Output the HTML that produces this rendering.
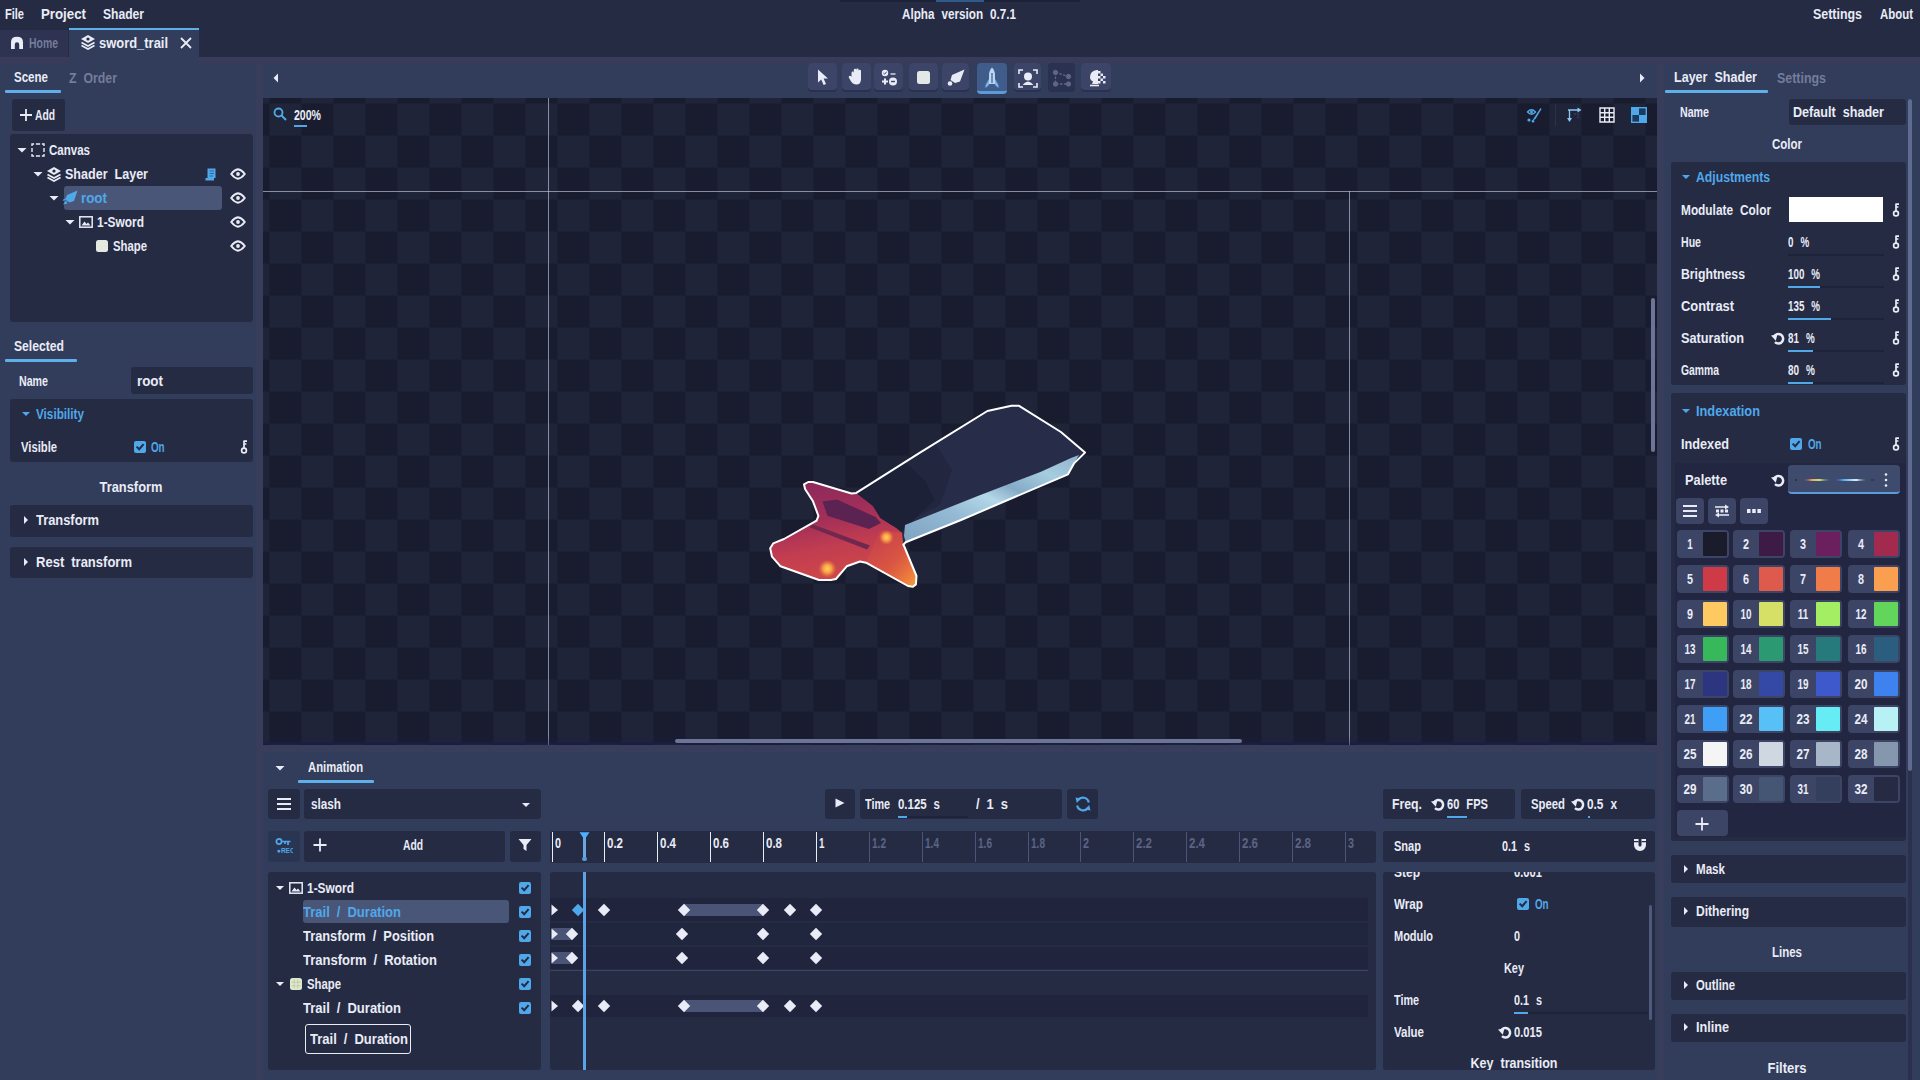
<!DOCTYPE html>
<html><head><meta charset="utf-8"><title>sword_trail</title>
<style>
html,body{margin:0;padding:0;background:#323c5b;}
body{width:1920px;height:1080px;position:relative;overflow:hidden;font-family:"Liberation Sans","DejaVu Sans",sans-serif;font-weight:bold;font-size:14px;}
div,svg,span.t{position:absolute;display:block;}
span.t{height:20px;line-height:20px;white-space:pre;}
</style></head><body>
<!--menu bar-->
<div style="left:0px;top:0px;width:1920px;height:1080px;background:#323c5b;"></div>
<div style="left:0px;top:0px;width:1920px;height:58px;background:#262b44;"></div>
<div style="left:840px;top:0px;width:240px;height:2px;background:#1d2137;"></div>
<div style="left:936px;top:0px;width:48px;height:2px;background:#31598a;"></div>
<span class="t" style="top:4px;color:#e9ecf6;transform:scaleX(0.788);left:5px;transform-origin:0 50%;">File</span>
<span class="t" style="top:4px;color:#e9ecf6;transform:scaleX(0.948);left:41px;transform-origin:0 50%;">Project</span>
<span class="t" style="top:4px;color:#e9ecf6;transform:scaleX(0.864);left:103px;transform-origin:0 50%;">Shader</span>
<span class="t" style="top:4px;color:#e9ecf6;transform:scaleX(0.835);word-spacing:4.50px;left:809px;width:300px;text-align:center;transform-origin:50% 50%;">Alpha version 0.7.1</span>
<span class="t" style="top:4px;color:#e9ecf6;transform:scaleX(0.887);left:1813px;transform-origin:0 50%;">Settings</span>
<span class="t" style="top:4px;color:#e9ecf6;transform:scaleX(0.816);left:1880px;transform-origin:0 50%;">About</span>
<div style="left:0px;top:57px;width:1920px;height:7px;background:#383c5a;"></div>
<div style="left:263px;top:745px;width:1394px;height:7px;background:#383d5b;"></div>
<div style="left:0px;top:30px;width:68px;height:27px;background:#2d3350;"></div>
<div style="left:69px;top:28px;width:130px;height:36px;background:#323c5b;"></div>
<div style="left:69px;top:28px;width:130px;height:2px;background:#5fb0e8;"></div>
<svg style="left:10px;top:36px;" width="14" height="13" viewBox="0 0 14 13"><path d="M1 13 V6 Q1 0.8 7 0.8 Q13 0.8 13 6 V13 H9.2 V8.5 Q9.2 6.3 7 6.3 Q4.8 6.3 4.8 8.5 V13 Z" fill="#e9ecf6"/></svg>
<span class="t" style="top:33px;color:#747d9a;transform:scaleX(0.746);left:29px;transform-origin:0 50%;">Home</span>
<svg style="left:80px;top:34px;" width="16" height="16" viewBox="0 0 16 16"><path d="M8 1 L15 5 L8 9 L1 5 Z" fill="#e9ecf6"/><path d="M1.5 8.5 L8 12 L14.5 8.5" fill="none" stroke="#e9ecf6" stroke-width="1.8"/><path d="M1.5 11.5 L8 15 L14.5 11.5" fill="none" stroke="#e9ecf6" stroke-width="1.8"/><circle cx="8" cy="5" r="1.6" fill="#262b44"/></svg>
<span class="t" style="top:33px;color:#e9ecf6;transform:scaleX(0.924);left:99px;transform-origin:0 50%;">sword_trail</span>
<svg style="left:180px;top:37px;" width="12" height="12" viewBox="0 0 12 12"><path d="M1 1 L11 11 M11 1 L1 11" stroke="#e9ecf6" stroke-width="1.8"/></svg>
<!--left panel-->
<span class="t" style="top:67px;color:#e9ecf6;transform:scaleX(0.824);left:14px;transform-origin:0 50%;">Scene</span>
<div style="left:5px;top:90px;width:56px;height:3px;background:#5fb0e8;border-radius:1px;"></div>
<span class="t" style="top:68px;color:#747d9a;transform:scaleX(0.878);word-spacing:4.08px;left:69px;transform-origin:0 50%;">Z Order</span>
<div style="left:256px;top:64px;width:7px;height:1016px;background:#383d5b;"></div>
<div style="left:8px;top:128px;width:248px;height:7px;background:#363b59;"></div>
<div style="left:12px;top:99px;width:53px;height:32px;background:#262b44;border-radius:3px;"></div>
<svg style="left:20px;top:109px;" width="12" height="12" viewBox="0 0 12 12"><path d="M6 0 V12 M0 6 H12" stroke="#e9ecf6" stroke-width="1.8"/></svg>
<span class="t" style="top:105px;color:#e9ecf6;transform:scaleX(0.735);left:35px;transform-origin:0 50%;">Add</span>
<div style="left:10px;top:134px;width:243px;height:188px;background:#262b44;border-radius:3px;"></div>
<svg style="left:16px;top:144px;" width="12" height="12" viewBox="0 0 12 12"><path d="M1.5 4 L10.5 4 L6 8.5 Z" fill="#e9ecf6"/></svg>
<svg style="left:31px;top:143px;" width="14" height="14" viewBox="0 0 14 14"><rect x="1" y="1" width="12" height="12" fill="none" stroke="#e9ecf6" stroke-width="1.4" stroke-dasharray="4.2 1.8" stroke-dashoffset="2.1"/></svg>
<span class="t" style="top:140px;color:#e9ecf6;transform:scaleX(0.823);left:49px;transform-origin:0 50%;">Canvas</span>
<svg style="left:32px;top:168px;" width="12" height="12" viewBox="0 0 12 12"><path d="M1.5 4 L10.5 4 L6 8.5 Z" fill="#e9ecf6"/></svg>
<svg style="left:46px;top:166px;" width="16" height="16" viewBox="0 0 16 16"><path d="M8 1 L15 5 L8 9 L1 5 Z" fill="#e9ecf6"/><path d="M1.5 8.5 L8 12 L14.5 8.5" fill="none" stroke="#e9ecf6" stroke-width="1.8"/><path d="M1.5 11.5 L8 15 L14.5 11.5" fill="none" stroke="#e9ecf6" stroke-width="1.8"/><circle cx="8" cy="5" r="1.6" fill="#262b44"/></svg>
<span class="t" style="top:164px;color:#e9ecf6;transform:scaleX(0.896);word-spacing:3.92px;left:65px;transform-origin:0 50%;">Shader Layer</span>
<svg style="left:205px;top:168px;" width="11" height="13" viewBox="0 0 11 13"><path d="M2.500 0.500 H10.500 V10 H9 V12.500 H0.500 V10 H2.500 Z" fill="#4fa8ea"/><path d="M4.500 3 H9 M4.500 5.500 H9 M4.500 8 H8" stroke="#2c5f96" stroke-width="0.900"/></svg>
<svg style="left:230px;top:168px;" width="16" height="12" viewBox="0 0 16 12"><path d="M1.200 6 Q4.500 1.800 8 1.300 Q11.500 1.800 14.800 6 Q11.500 10.200 8 10.700 Q4.500 10.200 1.200 6 Z" fill="none" stroke="#e9ecf6" stroke-width="2" stroke-linejoin="round"/><circle cx="8" cy="6" r="1.900" fill="#e9ecf6"/></svg>
<div style="left:64px;top:186px;width:158px;height:24px;background:#4a5678;border-radius:3px;"></div>
<svg style="left:48px;top:192px;" width="12" height="12" viewBox="0 0 12 12"><path d="M1.5 4 L10.5 4 L6 8.5 Z" fill="#e9ecf6"/></svg>
<svg style="left:62px;top:190px;" width="16" height="16" viewBox="0 0 16 16"><path d="M15.5 0.5 L5 5 L3 9.5 L7.5 12.5 L12 11 Z" fill="#4fa8ea"/><path d="M4 10.5 L1 14.5 L5.5 13.5 Z" fill="#4fa8ea"/><path d="M2 8.5 L0.5 11 L3.5 10 Z" fill="#4fa8ea"/></svg>
<span class="t" style="top:188px;color:#4fa8ea;transform:scaleX(0.955);left:81px;transform-origin:0 50%;">root</span>
<svg style="left:230px;top:192px;" width="16" height="12" viewBox="0 0 16 12"><path d="M1.200 6 Q4.500 1.800 8 1.300 Q11.500 1.800 14.800 6 Q11.500 10.200 8 10.700 Q4.500 10.200 1.200 6 Z" fill="none" stroke="#e9ecf6" stroke-width="2" stroke-linejoin="round"/><circle cx="8" cy="6" r="1.900" fill="#e9ecf6"/></svg>
<svg style="left:64px;top:216px;" width="12" height="12" viewBox="0 0 12 12"><path d="M1.5 4 L10.5 4 L6 8.5 Z" fill="#e9ecf6"/></svg>
<svg style="left:79px;top:216px;" width="14" height="12" viewBox="0 0 14 12"><rect x="0.8" y="0.8" width="12.4" height="10.4" fill="none" stroke="#e9ecf6" stroke-width="1.5"/><path d="M2.5 9.5 L5.5 5.5 L7.5 8 L9 6.5 L11.5 9.5 Z" fill="#e9ecf6"/></svg>
<span class="t" style="top:212px;color:#e9ecf6;transform:scaleX(0.851);left:97px;transform-origin:0 50%;">1-Sword</span>
<svg style="left:230px;top:216px;" width="16" height="12" viewBox="0 0 16 12"><path d="M1.200 6 Q4.500 1.800 8 1.300 Q11.500 1.800 14.800 6 Q11.500 10.200 8 10.700 Q4.500 10.200 1.200 6 Z" fill="none" stroke="#e9ecf6" stroke-width="2" stroke-linejoin="round"/><circle cx="8" cy="6" r="1.900" fill="#e9ecf6"/></svg>
<svg style="left:96px;top:240px;" width="12" height="12" viewBox="0 0 12 12"><rect x="0" y="0" width="12" height="12" rx="2.5" fill="#e4e8e2"/></svg>
<span class="t" style="top:236px;color:#e9ecf6;transform:scaleX(0.809);left:113px;transform-origin:0 50%;">Shape</span>
<svg style="left:230px;top:240px;" width="16" height="12" viewBox="0 0 16 12"><path d="M1.200 6 Q4.500 1.800 8 1.300 Q11.500 1.800 14.800 6 Q11.500 10.200 8 10.700 Q4.500 10.200 1.200 6 Z" fill="none" stroke="#e9ecf6" stroke-width="2" stroke-linejoin="round"/><circle cx="8" cy="6" r="1.900" fill="#e9ecf6"/></svg>
<span class="t" style="top:336px;color:#e9ecf6;transform:scaleX(0.868);left:14px;transform-origin:0 50%;">Selected</span>
<div style="left:5px;top:359px;width:72px;height:3px;background:#5fb0e8;border-radius:1px;"></div>
<span class="t" style="top:371px;color:#e9ecf6;transform:scaleX(0.761);left:19px;transform-origin:0 50%;">Name</span>
<div style="left:131px;top:367px;width:122px;height:27px;background:#262b44;border-radius:3px;"></div>
<span class="t" style="top:371px;color:#e9ecf6;transform:scaleX(0.955);left:137px;transform-origin:0 50%;">root</span>
<div style="left:10px;top:399px;width:243px;height:63px;background:#262b44;border-radius:3px;"></div>
<svg style="left:20px;top:408px;" width="12" height="12" viewBox="0 0 12 12"><path d="M2 4 L10 4 L6 8 Z" fill="#4fa8ea"/></svg>
<span class="t" style="top:404px;color:#4fa8ea;transform:scaleX(0.837);left:36px;transform-origin:0 50%;">Visibility</span>
<span class="t" style="top:437px;color:#e9ecf6;transform:scaleX(0.802);left:21px;transform-origin:0 50%;">Visible</span>
<svg style="left:134px;top:441px;" width="12" height="12" viewBox="0 0 12 12"><rect x="0" y="0" width="12" height="12" rx="2" fill="#4fa8ea"/><path d="M2.6 5.6 L5.2 8.2 L9.6 3.2" stroke="#262b44" stroke-width="2" fill="none"/></svg>
<span class="t" style="top:437px;color:#4fa8ea;transform:scaleX(0.700);left:151px;transform-origin:0 50%;">On</span>
<svg style="left:240px;top:439px;" width="8" height="16" viewBox="0 0 8 16"><circle cx="4" cy="11.5" r="2.4" fill="none" stroke="#e9ecf6" stroke-width="1.7"/><path d="M4 9 V1.5 M4 2.2 H7 M4 5 H6.4" stroke="#e9ecf6" stroke-width="1.7" fill="none"/></svg>
<span class="t" style="top:477px;color:#e9ecf6;transform:scaleX(0.920);left:-19px;width:300px;text-align:center;transform-origin:50% 50%;">Transform</span>
<div style="left:10px;top:505px;width:243px;height:32px;background:#262b44;border-radius:3px;"></div>
<svg style="left:20px;top:514px;" width="12" height="12" viewBox="0 0 12 12"><path d="M4 2 L4 10 L8 6 Z" fill="#e9ecf6"/></svg>
<span class="t" style="top:510px;color:#e9ecf6;transform:scaleX(0.920);left:36px;transform-origin:0 50%;">Transform</span>
<div style="left:10px;top:547px;width:243px;height:31px;background:#262b44;border-radius:3px;"></div>
<svg style="left:20px;top:556px;" width="12" height="12" viewBox="0 0 12 12"><path d="M4 2 L4 10 L8 6 Z" fill="#e9ecf6"/></svg>
<span class="t" style="top:552px;color:#e9ecf6;transform:scaleX(0.930);word-spacing:3.64px;left:36px;transform-origin:0 50%;">Rest transform</span>
<!--toolbar-->
<svg style="left:270px;top:72px;" width="12" height="12" viewBox="0 0 12 12"><path d="M8 1.5 L8 10.5 L3.5 6 Z" fill="#e9ecf6"/></svg>
<svg style="left:1636px;top:72px;" width="12" height="12" viewBox="0 0 12 12"><path d="M4 1.5 L4 10.5 L8.5 6 Z" fill="#e9ecf6"/></svg>
<div style="left:808px;top:63px;width:29px;height:29px;background:#2a3050;border-radius:4px;"></div>
<div style="left:808px;top:63px;width:29px;height:27px;background:#3c4567;border-radius:4px;"></div>
<div style="left:842px;top:63px;width:29px;height:29px;background:#2a3050;border-radius:4px;"></div>
<div style="left:842px;top:63px;width:29px;height:27px;background:#3c4567;border-radius:4px;"></div>
<div style="left:874px;top:63px;width:29px;height:29px;background:#2a3050;border-radius:4px;"></div>
<div style="left:874px;top:63px;width:29px;height:27px;background:#3c4567;border-radius:4px;"></div>
<div style="left:909px;top:63px;width:29px;height:29px;background:#2a3050;border-radius:4px;"></div>
<div style="left:909px;top:63px;width:29px;height:27px;background:#3c4567;border-radius:4px;"></div>
<div style="left:942px;top:63px;width:27px;height:29px;background:#2a3050;border-radius:4px;"></div>
<div style="left:942px;top:63px;width:27px;height:27px;background:#3c4567;border-radius:4px;"></div>
<div style="left:977px;top:63px;width:30px;height:31px;background:#3f5c8a;border-radius:4px;border-bottom:3px solid #5b9bd8;box-sizing:border-box;"></div>
<div style="left:1014px;top:63px;width:27px;height:29px;background:#2a3050;border-radius:4px;"></div>
<div style="left:1014px;top:63px;width:27px;height:27px;background:#3c4567;border-radius:4px;"></div>
<div style="left:1048px;top:63px;width:27px;height:29px;background:#2a3050;border-radius:4px;"></div>
<div style="left:1048px;top:63px;width:27px;height:27px;background:#2b3150;border-radius:4px;"></div>
<div style="left:1081px;top:63px;width:30px;height:29px;background:#2a3050;border-radius:4px;"></div>
<div style="left:1081px;top:63px;width:30px;height:27px;background:#3c4567;border-radius:4px;"></div>
<svg style="left:816px;top:69px;" width="14" height="17" viewBox="0 0 14 17"><path d="M2 0.5 L2 13.5 L5.2 10.4 L7.6 16 L10 15 L7.6 9.6 L12 9.6 Z" fill="#e9ecf6"/></svg>
<svg style="left:848px;top:68px;" width="17" height="18" viewBox="0 0 17 18"><path d="M3.5 9 V5 Q3.5 3.6 4.7 3.6 Q5.8 3.6 5.8 5 V2.2 Q5.8 0.8 7 0.8 Q8.2 0.8 8.2 2.2 V1.8 Q8.2 0.5 9.4 0.5 Q10.6 0.5 10.6 1.8 V3 Q10.6 1.8 11.8 1.8 Q13 1.8 13 3 V11 Q13 16.5 8.5 16.5 Q4.5 16.5 2.5 12.5 L0.8 9.5 Q0.5 8 1.8 7.8 Q2.8 7.8 3.5 9 Z" fill="#e9ecf6"/></svg>
<svg style="left:880px;top:69px;" width="18" height="18" viewBox="0 0 18 18"><circle cx="5" cy="4" r="3.2" fill="#e9ecf6"/><circle cx="13" cy="12.5" r="4" fill="#e9ecf6"/><path d="M2 12.5 H8 M5 9.5 V15.5" stroke="#e9ecf6" stroke-width="2"/><path d="M10.5 5 H15.5" stroke="#e9ecf6" stroke-width="1.3"/><path d="M3.4 4 L4.6 5.2 L6.6 2.8" stroke="#3c4567" stroke-width="1" fill="none"/><path d="M11 12.5 H15" stroke="#3c4567" stroke-width="1.4"/></svg>
<svg style="left:917px;top:71px;" width="13" height="13" viewBox="0 0 13 13"><rect x="0" y="0" width="13" height="13" rx="2.5" fill="#e3e7e6"/></svg>
<svg style="left:947px;top:69px;" width="18" height="18" viewBox="0 0 18 18"><path d="M17.5 0.5 L5 6 L3.5 11 L8 14 L13 12.5 Z" fill="#e9ecf6"/><circle cx="3" cy="14.5" r="2.3" fill="#e9ecf6"/></svg>
<svg style="left:984px;top:67px;" width="16" height="22" viewBox="0 0 16 22"><path d="M8 0.5 Q11 3.5 11 8 V17 H5 V8 Q5 3.5 8 0.5 Z" fill="#b9d7f5"/><path d="M5 12 L1.5 18 V21 L5 18 Z M11 12 L14.500 18 V21 L11 18 Z" fill="#7eb2e6"/><path d="M8 6 V16" stroke="#3f5c8a" stroke-width="1.2"/></svg>
<svg style="left:1018px;top:69px;" width="20" height="19" viewBox="0 0 20 19"><path d="M1 5 V1 H5 M15 1 H19 V5 M19 14 V18 H15 M5 18 H1 V14" fill="none" stroke="#e9ecf6" stroke-width="1.6"/><circle cx="10" cy="7.500" r="4" fill="#e9ecf6"/><path d="M4.500 16 Q10 9 15.500 16 Z" fill="#e9ecf6"/></svg>
<svg style="left:1052px;top:69px;" width="20" height="18" viewBox="0 0 20 18"><g fill="#5d6788" stroke="#5d6788"><circle cx="3.500" cy="3.500" r="2.200"/><circle cx="16.500" cy="7.500" r="2.200"/><circle cx="3.500" cy="15" r="2.200"/><circle cx="16.500" cy="15" r="2.200"/><path d="M3.500 3.500 L16.500 7.500 M3.500 3.500 V15 H16.500" fill="none" stroke-width="1.300" stroke-dasharray="2.500 1.500"/></g></svg>
<svg style="left:1088px;top:69px;" width="18" height="18" viewBox="0 0 18 18"><path d="M9 1 Q2 2 2 8 Q2 11 5 12.5 L4 15 H10 V1 Z" fill="#e9ecf6"/><g fill="#e9ecf6"><rect x="10" y="2" width="2.500" height="2.500"/><rect x="12.500" y="4.500" width="2.500" height="2.500"/><rect x="10" y="7" width="2.500" height="2.500"/><rect x="12.500" y="9.500" width="2.500" height="2.500"/><rect x="15" y="7" width="2.500" height="2.500"/><rect x="10" y="12" width="2.500" height="2.500"/><rect x="15" y="12" width="2.500" height="2.500"/></g><path d="M2 16.500 H11" stroke="#e9ecf6" stroke-width="1.600"/></svg>
<!--viewport-->
<div id="vp" style="left:263px;top:98px;width:1394px;height:647px;background-color:#1f2438;background-image:conic-gradient(#191c2e 25%,transparent 0 50%,#191c2e 0 75%,transparent 0);background-size:64px 64px;background-position:38.5px 37.5px;overflow:hidden;">
<div style="left:0;top:93px;width:1394px;height:1px;background:rgba(200,208,235,0.62)"></div>
<div style="left:285px;top:0;width:1px;height:647px;background:rgba(200,208,235,0.62)"></div>
<div style="left:1086px;top:93px;width:1px;height:647px;background:rgba(200,208,235,0.62)"></div>
<div style="left:0;top:638px;width:1394px;height:9px;background:linear-gradient(to bottom,rgba(26,28,78,0),rgba(26,28,78,0.45))"></div>
</div>
<svg style="left:273px;top:107px;" width="14" height="14" viewBox="0 0 14 14"><circle cx="5.500" cy="5.500" r="4" fill="none" stroke="#4fa8ea" stroke-width="1.800"/><path d="M8.500 8.500 L13 13" stroke="#4fa8ea" stroke-width="2"/></svg>
<span class="t" style="top:105px;color:#e9ecf6;transform:scaleX(0.754);left:294px;transform-origin:0 50%;">200%</span>
<div style="left:294px;top:125px;width:13px;height:2px;background:#4fa8ea;"></div>
<svg style="left:1526px;top:107px;" width="16" height="16" viewBox="0 0 16 16"><path d="M1.500 5 Q5.500 0.500 9.500 5 Q5.500 9.500 1.500 5 Z" fill="none" stroke="#4fa8ea" stroke-width="1.400"/><circle cx="5.500" cy="5" r="1.400" fill="#4fa8ea"/><path d="M14.500 1 L8 11 L6 14 L9.500 12 L15.500 2 Z" fill="#4fa8ea"/><circle cx="3" cy="13" r="1.600" fill="#4fa8ea"/><circle cx="7" cy="14.200" r="1.300" fill="#4fa8ea"/></svg>
<svg style="left:1566px;top:107px;" width="16" height="16" viewBox="0 0 16 16"><path d="M3.500 3 V12.500 M2 3 H12.500" stroke="#8cc6f6" stroke-width="1.300" fill="none"/><path d="M1 11 L3.500 15 L6 11 Z M11.500 0.500 L15.500 3 L11.500 5.500 Z" fill="#8cc6f6"/><path d="M8 7 H12 V11" stroke="#2f4f7a" stroke-width="1.200" fill="none" stroke-dasharray="2 1.200"/></svg>
<div style="left:1555px;top:104px;width:1px;height:22px;background:#2b3150;"></div>
<svg style="left:1599px;top:107px;" width="16" height="16" viewBox="0 0 16 16"><path d="M1 1 H15 V15 H1 Z M1 5.700 H15 M1 10.300 H15 M5.700 1 V15 M10.300 1 V15" fill="none" stroke="#e9ecf6" stroke-width="1.400"/></svg>
<svg style="left:1631px;top:107px;" width="16" height="16" viewBox="0 0 16 16"><rect x="0.700" y="0.700" width="14.600" height="14.600" fill="#1d3a5e" stroke="#4fa8ea" stroke-width="1.400"/><rect x="1" y="1" width="7" height="7" fill="#4fa8ea"/><rect x="8" y="8" width="7" height="7" fill="#4fa8ea"/></svg>
<div style="left:675px;top:739px;width:567px;height:4px;background:#6d7596;border-radius:2px;"></div>
<div style="left:1651px;top:298px;width:4px;height:154px;background:#6d7596;border-radius:2px;"></div>
<!--sword-->
<svg style="left:760px;top:395px;" width="340" height="200" viewBox="0 0 340 200"><defs><linearGradient id="gd" gradientUnits="userSpaceOnUse" x1="70" y1="88" x2="90" y2="190"><stop offset="0" stop-color="#8f2a5b"/><stop offset="0.35" stop-color="#a53058"/><stop offset="0.6" stop-color="#c13d50"/><stop offset="1" stop-color="#d24b46"/></linearGradient>
<linearGradient id="wg" x1="0" y1="0" x2="1" y2="1"><stop offset="0" stop-color="#d8503f" stop-opacity="0"/><stop offset="0.55" stop-color="#dd5c40" stop-opacity="0.7"/><stop offset="0.85" stop-color="#ee803c"/><stop offset="1" stop-color="#f9a03c"/></linearGradient>
<linearGradient id="ed" x1="0" y1="1" x2="1" y2="0"><stop offset="0" stop-color="#7ea3c2"/><stop offset="0.3" stop-color="#93b9d3"/><stop offset="0.5" stop-color="#b4d7e8"/><stop offset="0.62" stop-color="#86abc7"/><stop offset="0.8" stop-color="#a6cce0"/><stop offset="1" stop-color="#8fb4cd"/></linearGradient>
<radialGradient id="gl"><stop offset="0" stop-color="#ffd264"/><stop offset="0.45" stop-color="#fba645" stop-opacity="0.95"/><stop offset="1" stop-color="#f08040" stop-opacity="0"/></radialGradient></defs>
<polygon points="44.0,89.4 48.2,87.0 53.0,87.0 91.5,98.5 96.3,97.9 160.0,57.6 227.4,16.0 251.5,10.7 258.7,10.7 300.9,37.0 325.0,57.6 314.0,68.4 308.0,79.3 201.0,125.0 145.7,147.2 143.3,149.7 144.5,152.0 156.5,181.0 155.9,189.4 152.9,191.8 148.0,191.0 106.0,167.7 100.0,166.5 86.7,171.3 75.9,184.0 71.0,185.0 59.0,185.0 20.5,171.3 12.0,161.7 10.2,153.3 13.2,148.4 24.0,144.0 56.6,125.6 58.4,120.8 53.0,106.3 45.2,94.3" fill="url(#gd)"/>
<polygon points="62.6,106.5 77.0,104.5 115.6,122.0 121.0,128.0 109.0,134.0 67.4,120.8" fill="#5a2351"/>
<polygon points="49.0,132.0 53.0,129.5 110.0,150.5 107.0,154.5" fill="#712850"/>
<polygon points="120.0,135.0 143.0,138.0 144.5,152.0 156.5,181.0 155.9,189.4 152.9,191.8 148.0,191.0 106.0,167.7 112.0,153.0" fill="url(#wg)"/>
<polygon points="96.3,97.9 160.0,57.6 227.4,16.0 251.5,10.7 258.7,10.7 300.9,37.0 325.0,57.6 314.0,68.4 308.0,79.3 201.0,125.0 145.7,147.2 143.3,149.7 142.0,137.6 136.0,132.8 120.4,123.0 113.0,111.0" fill="#272c49"/>
<polygon points="96.3,97.9 145.0,67.0 165.0,85.0 175.0,105.0 145.0,133.0 142.0,137.6 136.0,132.8 120.4,123.0 113.0,111.0" fill="#1d2137"/>
<polygon points="145.0,67.0 175.0,48.0 192.0,75.0 180.0,110.0 160.0,120.0 145.0,133.0 175.0,105.0 165.0,85.0" fill="#22263f"/>
<polygon points="319.0,60.0 314.0,68.4 308.0,79.3 201.0,125.0 145.7,147.2 144.0,141.0 145.0,130.0 217.8,101.0 280.4,76.9 311.0,63.0" fill="url(#ed)"/>
<circle cx="126.39999999999998" cy="142.39999999999998" r="7.500" fill="url(#gl)"/><circle cx="67.39999999999998" cy="173.70000000000005" r="9" fill="url(#gl)"/>
<polygon points="44.0,89.4 48.2,87.0 53.0,87.0 91.5,98.5 96.3,97.9 160.0,57.6 227.4,16.0 251.5,10.7 258.7,10.7 300.9,37.0 325.0,57.6 314.0,68.4 308.0,79.3 201.0,125.0 145.7,147.2 143.3,149.7 144.5,152.0 156.5,181.0 155.9,189.4 152.9,191.8 148.0,191.0 106.0,167.7 100.0,166.5 86.7,171.3 75.9,184.0 71.0,185.0 59.0,185.0 20.5,171.3 12.0,161.7 10.2,153.3 13.2,148.4 24.0,144.0 56.6,125.6 58.4,120.8 53.0,106.3 45.2,94.3" fill="none" stroke="#ffffff" stroke-width="2" stroke-linejoin="round"/></svg>
<!--right panel-->
<div style="left:1657px;top:64px;width:7px;height:1016px;background:#383d5b;"></div>
<span class="t" style="top:67px;color:#e9ecf6;transform:scaleX(0.896);word-spacing:3.92px;left:1674px;transform-origin:0 50%;">Layer Shader</span>
<div style="left:1665px;top:90px;width:103px;height:3px;background:#5fb0e8;border-radius:1px;"></div>
<span class="t" style="top:68px;color:#747d9a;transform:scaleX(0.887);left:1777px;transform-origin:0 50%;">Settings</span>
<span class="t" style="top:102px;color:#e9ecf6;transform:scaleX(0.761);left:1680px;transform-origin:0 50%;">Name</span>
<div style="left:1789px;top:99px;width:117px;height:26px;background:#262b44;border-radius:3px;"></div>
<span class="t" style="top:102px;color:#e9ecf6;transform:scaleX(0.900);word-spacing:3.89px;left:1793px;transform-origin:0 50%;">Default shader</span>
<span class="t" style="top:134px;color:#e9ecf6;transform:scaleX(0.821);left:1637px;width:300px;text-align:center;transform-origin:50% 50%;">Color</span>
<div style="left:1908px;top:99px;width:4px;height:981px;background:#2a304e;"></div>
<div style="left:1908px;top:99px;width:4px;height:672px;background:#5f6b90;border-radius:2px;"></div>
<div style="left:1671px;top:162px;width:235px;height:223px;background:#262b44;border-radius:3px;"></div>
<svg style="left:1680px;top:171px;" width="12" height="12" viewBox="0 0 12 12"><path d="M2 4 L10 4 L6 8 Z" fill="#4fa8ea"/></svg>
<span class="t" style="top:167px;color:#4fa8ea;transform:scaleX(0.873);left:1696px;transform-origin:0 50%;">Adjustments</span>
<span class="t" style="top:200px;color:#e9ecf6;transform:scaleX(0.847);word-spacing:4.38px;left:1681px;transform-origin:0 50%;">Modulate Color</span>
<div style="left:1789px;top:197px;width:94px;height:25px;background:#ffffff;"></div>
<svg style="left:1892px;top:202px;" width="8" height="16" viewBox="0 0 8 16"><circle cx="4" cy="11.5" r="2.4" fill="none" stroke="#e9ecf6" stroke-width="1.7"/><path d="M4 9 V1.5 M4 2.2 H7 M4 5 H6.4" stroke="#e9ecf6" stroke-width="1.7" fill="none"/></svg>
<span class="t" style="top:232px;color:#e9ecf6;transform:scaleX(0.756);left:1681px;transform-origin:0 50%;">Hue</span>
<span class="t" style="top:232px;color:#e9ecf6;transform:scaleX(0.700);word-spacing:6.11px;left:1788px;transform-origin:0 50%;">0 %</span>
<svg style="left:1892px;top:234px;" width="8" height="16" viewBox="0 0 8 16"><circle cx="4" cy="11.5" r="2.4" fill="none" stroke="#e9ecf6" stroke-width="1.7"/><path d="M4 9 V1.5 M4 2.2 H7 M4 5 H6.4" stroke="#e9ecf6" stroke-width="1.7" fill="none"/></svg>
<div style="left:1788px;top:254px;width:96px;height:2px;background:#1f2339;"></div>
<span class="t" style="top:264px;color:#e9ecf6;transform:scaleX(0.875);left:1681px;transform-origin:0 50%;">Brightness</span>
<span class="t" style="top:264px;color:#e9ecf6;transform:scaleX(0.700);word-spacing:6.11px;left:1788px;transform-origin:0 50%;">100 %</span>
<svg style="left:1892px;top:266px;" width="8" height="16" viewBox="0 0 8 16"><circle cx="4" cy="11.5" r="2.4" fill="none" stroke="#e9ecf6" stroke-width="1.7"/><path d="M4 9 V1.5 M4 2.2 H7 M4 5 H6.4" stroke="#e9ecf6" stroke-width="1.7" fill="none"/></svg>
<div style="left:1788px;top:286px;width:96px;height:2px;background:#1f2339;"></div>
<div style="left:1788px;top:286px;width:32px;height:2px;background:#4fa8ea;"></div>
<span class="t" style="top:296px;color:#e9ecf6;transform:scaleX(0.921);left:1681px;transform-origin:0 50%;">Contrast</span>
<span class="t" style="top:296px;color:#e9ecf6;transform:scaleX(0.700);word-spacing:6.11px;left:1788px;transform-origin:0 50%;">135 %</span>
<svg style="left:1892px;top:298px;" width="8" height="16" viewBox="0 0 8 16"><circle cx="4" cy="11.5" r="2.4" fill="none" stroke="#e9ecf6" stroke-width="1.7"/><path d="M4 9 V1.5 M4 2.2 H7 M4 5 H6.4" stroke="#e9ecf6" stroke-width="1.7" fill="none"/></svg>
<div style="left:1788px;top:318px;width:96px;height:2px;background:#1f2339;"></div>
<div style="left:1788px;top:318px;width:43px;height:2px;background:#4fa8ea;"></div>
<span class="t" style="top:328px;color:#e9ecf6;transform:scaleX(0.910);left:1681px;transform-origin:0 50%;">Saturation</span>
<span class="t" style="top:328px;color:#e9ecf6;transform:scaleX(0.700);word-spacing:6.11px;left:1788px;transform-origin:0 50%;">81 %</span>
<svg style="left:1892px;top:330px;" width="8" height="16" viewBox="0 0 8 16"><circle cx="4" cy="11.5" r="2.4" fill="none" stroke="#e9ecf6" stroke-width="1.7"/><path d="M4 9 V1.5 M4 2.2 H7 M4 5 H6.4" stroke="#e9ecf6" stroke-width="1.7" fill="none"/></svg>
<div style="left:1788px;top:350px;width:96px;height:2px;background:#1f2339;"></div>
<div style="left:1788px;top:350px;width:25px;height:2px;background:#4fa8ea;"></div>
<span class="t" style="top:360px;color:#e9ecf6;transform:scaleX(0.740);left:1681px;transform-origin:0 50%;">Gamma</span>
<span class="t" style="top:360px;color:#e9ecf6;transform:scaleX(0.714);word-spacing:5.92px;left:1788px;transform-origin:0 50%;">80 %</span>
<svg style="left:1892px;top:362px;" width="8" height="16" viewBox="0 0 8 16"><circle cx="4" cy="11.5" r="2.4" fill="none" stroke="#e9ecf6" stroke-width="1.7"/><path d="M4 9 V1.5 M4 2.2 H7 M4 5 H6.4" stroke="#e9ecf6" stroke-width="1.7" fill="none"/></svg>
<div style="left:1788px;top:382px;width:96px;height:2px;background:#1f2339;"></div>
<div style="left:1788px;top:382px;width:25px;height:2px;background:#4fa8ea;"></div>
<svg style="left:1771px;top:331px;" width="14" height="14" viewBox="0 0 14 14"><path d="M4 11.2 A4.8 4.8 0 1 0 3 5.6" fill="none" stroke="#e9ecf6" stroke-width="2.5"/><path d="M0 4.6 L6.4 3.4 L4.8 9.8 Z" fill="#e9ecf6"/></svg>
<div style="left:1671px;top:393px;width:235px;height:448px;background:#262b44;border-radius:3px;"></div>
<svg style="left:1680px;top:405px;" width="12" height="12" viewBox="0 0 12 12"><path d="M2 4 L10 4 L6 8 Z" fill="#4fa8ea"/></svg>
<span class="t" style="top:401px;color:#4fa8ea;transform:scaleX(0.914);left:1696px;transform-origin:0 50%;">Indexation</span>
<span class="t" style="top:434px;color:#e9ecf6;transform:scaleX(0.907);left:1681px;transform-origin:0 50%;">Indexed</span>
<svg style="left:1790px;top:438px;" width="12" height="12" viewBox="0 0 12 12"><rect x="0" y="0" width="12" height="12" rx="2" fill="#4fa8ea"/><path d="M2.6 5.6 L5.2 8.2 L9.6 3.2" stroke="#262b44" stroke-width="2" fill="none"/></svg>
<span class="t" style="top:434px;color:#4fa8ea;transform:scaleX(0.700);left:1808px;transform-origin:0 50%;">On</span>
<svg style="left:1892px;top:436px;" width="8" height="16" viewBox="0 0 8 16"><circle cx="4" cy="11.5" r="2.4" fill="none" stroke="#e9ecf6" stroke-width="1.7"/><path d="M4 9 V1.5 M4 2.2 H7 M4 5 H6.4" stroke="#e9ecf6" stroke-width="1.7" fill="none"/></svg>
<div style="left:1675px;top:463px;width:231px;height:374px;background:#222640;border-radius:3px;"></div>
<span class="t" style="top:470px;color:#e9ecf6;transform:scaleX(0.915);left:1685px;transform-origin:0 50%;">Palette</span>
<svg style="left:1771px;top:473px;" width="14" height="14" viewBox="0 0 14 14"><path d="M4 11.2 A4.8 4.8 0 1 0 3 5.6" fill="none" stroke="#e9ecf6" stroke-width="2.5"/><path d="M0 4.6 L6.4 3.4 L4.8 9.8 Z" fill="#e9ecf6"/></svg>
<div style="left:1788px;top:465px;width:112px;height:29px;background:#3f4b6d;border-radius:4px;border-bottom:2px solid #5b9bd8;box-sizing:border-box;"></div>
<svg style="left:1792px;top:476px;" width="90" height="8" viewBox="0 0 90 8"><defs><linearGradient id="pg1"><stop offset="0" stop-color="#d05050" stop-opacity="0"/><stop offset="0.3" stop-color="#f0a050"/><stop offset="0.6" stop-color="#d0e070"/><stop offset="1" stop-color="#40a070" stop-opacity="0"/></linearGradient><linearGradient id="pg2"><stop offset="0" stop-color="#3050c0" stop-opacity="0"/><stop offset="0.3" stop-color="#50b0f0"/><stop offset="0.7" stop-color="#e0f0f8"/><stop offset="1" stop-color="#8090b0" stop-opacity="0"/></linearGradient></defs><rect x="3" y="3.2" width="2" height="1.6" fill="#2a2d48"/><rect x="12" y="3" width="26" height="2" fill="url(#pg1)"/><rect x="42" y="3" width="32" height="2" fill="url(#pg2)"/><rect x="78" y="3.2" width="5" height="1.6" fill="#343c5a"/></svg>
<svg style="left:1884px;top:472px;" width="4" height="16" viewBox="0 0 4 16"><circle cx="2" cy="2.500" r="1.300" fill="#e9ecf6"/><circle cx="2" cy="8" r="1.300" fill="#e9ecf6"/><circle cx="2" cy="13.500" r="1.300" fill="#e9ecf6"/></svg>
<div style="left:1676px;top:498px;width:28px;height:26px;background:#3c4566;border-radius:4px;"></div>
<div style="left:1708px;top:498px;width:28px;height:26px;background:#3c4566;border-radius:4px;"></div>
<div style="left:1740px;top:498px;width:28px;height:26px;background:#3c4566;border-radius:4px;"></div>
<svg style="left:1683px;top:504px;" width="14" height="14" viewBox="0 0 14 14"><path d="M0.5 2 H13.5 M0.5 7 H13.5 M0.5 12 H13.5" stroke="#e9ecf6" stroke-width="2" stroke-linecap="round"/></svg>
<svg style="left:1714px;top:504px;" width="16" height="14" viewBox="0 0 16 14"><path d="M1 3 H12 M4 11 H15" stroke="#e9ecf6" stroke-width="1.400"/><path d="M11 0.500 L15 3 L11 5.500 Z M5 8.500 L1 11 L5 13.500 Z" fill="#e9ecf6"/><rect x="2" y="5.500" width="3" height="3" fill="#e9ecf6"/><rect x="6.500" y="5.500" width="3" height="3" fill="#e9ecf6"/><rect x="11" y="5.500" width="3" height="3" fill="#e9ecf6"/></svg>
<svg style="left:1747px;top:508px;" width="14" height="6" viewBox="0 0 14 6"><rect x="0" y="1" width="3.500" height="4" fill="#e9ecf6"/><rect x="5.200" y="1" width="3.500" height="4" fill="#e9ecf6"/><rect x="10.400" y="1" width="3.500" height="4" fill="#e9ecf6"/></svg>
<div style="left:1677px;top:530px;width:52px;height:28px;background:#3c4566;border-radius:4px;"></div>
<div style="left:1703px;top:532px;width:24px;height:24px;background:#1a1c2c;border-radius:1px;"></div>
<span class="t" style="top:534px;color:#e9ecf6;transform:scaleX(0.700);left:1540px;width:300px;text-align:center;transform-origin:50% 50%;">1</span>
<div style="left:1733px;top:530px;width:52px;height:28px;background:#3c4566;border-radius:4px;"></div>
<div style="left:1759px;top:532px;width:24px;height:24px;background:#3e1a47;border-radius:1px;"></div>
<span class="t" style="top:534px;color:#e9ecf6;transform:scaleX(0.771);left:1596px;width:300px;text-align:center;transform-origin:50% 50%;">2</span>
<div style="left:1790px;top:530px;width:52px;height:28px;background:#3c4566;border-radius:4px;"></div>
<div style="left:1816px;top:532px;width:24px;height:24px;background:#6b1f5e;border-radius:1px;"></div>
<span class="t" style="top:534px;color:#e9ecf6;transform:scaleX(0.771);left:1653px;width:300px;text-align:center;transform-origin:50% 50%;">3</span>
<div style="left:1848px;top:530px;width:52px;height:28px;background:#3c4566;border-radius:4px;"></div>
<div style="left:1874px;top:532px;width:24px;height:24px;background:#a32a4f;border-radius:1px;"></div>
<span class="t" style="top:534px;color:#e9ecf6;transform:scaleX(0.771);left:1711px;width:300px;text-align:center;transform-origin:50% 50%;">4</span>
<div style="left:1677px;top:565px;width:52px;height:28px;background:#3c4566;border-radius:4px;"></div>
<div style="left:1703px;top:567px;width:24px;height:24px;background:#cf3a47;border-radius:1px;"></div>
<span class="t" style="top:569px;color:#e9ecf6;transform:scaleX(0.771);left:1540px;width:300px;text-align:center;transform-origin:50% 50%;">5</span>
<div style="left:1733px;top:565px;width:52px;height:28px;background:#3c4566;border-radius:4px;"></div>
<div style="left:1759px;top:567px;width:24px;height:24px;background:#dd5a4d;border-radius:1px;"></div>
<span class="t" style="top:569px;color:#e9ecf6;transform:scaleX(0.771);left:1596px;width:300px;text-align:center;transform-origin:50% 50%;">6</span>
<div style="left:1790px;top:565px;width:52px;height:28px;background:#3c4566;border-radius:4px;"></div>
<div style="left:1816px;top:567px;width:24px;height:24px;background:#f07c49;border-radius:1px;"></div>
<span class="t" style="top:569px;color:#e9ecf6;transform:scaleX(0.771);left:1653px;width:300px;text-align:center;transform-origin:50% 50%;">7</span>
<div style="left:1848px;top:565px;width:52px;height:28px;background:#3c4566;border-radius:4px;"></div>
<div style="left:1874px;top:567px;width:24px;height:24px;background:#fa9e4f;border-radius:1px;"></div>
<span class="t" style="top:569px;color:#e9ecf6;transform:scaleX(0.771);left:1711px;width:300px;text-align:center;transform-origin:50% 50%;">8</span>
<div style="left:1677px;top:600px;width:52px;height:28px;background:#3c4566;border-radius:4px;"></div>
<div style="left:1703px;top:602px;width:24px;height:24px;background:#fdc960;border-radius:1px;"></div>
<span class="t" style="top:604px;color:#e9ecf6;transform:scaleX(0.771);left:1540px;width:300px;text-align:center;transform-origin:50% 50%;">9</span>
<div style="left:1733px;top:600px;width:52px;height:28px;background:#3c4566;border-radius:4px;"></div>
<div style="left:1759px;top:602px;width:24px;height:24px;background:#d6e066;border-radius:1px;"></div>
<span class="t" style="top:604px;color:#e9ecf6;transform:scaleX(0.706);left:1596px;width:300px;text-align:center;transform-origin:50% 50%;">10</span>
<div style="left:1790px;top:600px;width:52px;height:28px;background:#3c4566;border-radius:4px;"></div>
<div style="left:1816px;top:602px;width:24px;height:24px;background:#a3ee63;border-radius:1px;"></div>
<span class="t" style="top:604px;color:#e9ecf6;transform:scaleX(0.700);left:1653px;width:300px;text-align:center;transform-origin:50% 50%;">11</span>
<div style="left:1848px;top:600px;width:52px;height:28px;background:#3c4566;border-radius:4px;"></div>
<div style="left:1874px;top:602px;width:24px;height:24px;background:#62d65a;border-radius:1px;"></div>
<span class="t" style="top:604px;color:#e9ecf6;transform:scaleX(0.706);left:1711px;width:300px;text-align:center;transform-origin:50% 50%;">12</span>
<div style="left:1677px;top:635px;width:52px;height:28px;background:#3c4566;border-radius:4px;"></div>
<div style="left:1703px;top:637px;width:24px;height:24px;background:#36b85b;border-radius:1px;"></div>
<span class="t" style="top:639px;color:#e9ecf6;transform:scaleX(0.706);left:1540px;width:300px;text-align:center;transform-origin:50% 50%;">13</span>
<div style="left:1733px;top:635px;width:52px;height:28px;background:#3c4566;border-radius:4px;"></div>
<div style="left:1759px;top:637px;width:24px;height:24px;background:#2b9a72;border-radius:1px;"></div>
<span class="t" style="top:639px;color:#e9ecf6;transform:scaleX(0.706);left:1596px;width:300px;text-align:center;transform-origin:50% 50%;">14</span>
<div style="left:1790px;top:635px;width:52px;height:28px;background:#3c4566;border-radius:4px;"></div>
<div style="left:1816px;top:637px;width:24px;height:24px;background:#277a7c;border-radius:1px;"></div>
<span class="t" style="top:639px;color:#e9ecf6;transform:scaleX(0.706);left:1653px;width:300px;text-align:center;transform-origin:50% 50%;">15</span>
<div style="left:1848px;top:635px;width:52px;height:28px;background:#3c4566;border-radius:4px;"></div>
<div style="left:1874px;top:637px;width:24px;height:24px;background:#2a5d7e;border-radius:1px;"></div>
<span class="t" style="top:639px;color:#e9ecf6;transform:scaleX(0.706);left:1711px;width:300px;text-align:center;transform-origin:50% 50%;">16</span>
<div style="left:1677px;top:670px;width:52px;height:28px;background:#3c4566;border-radius:4px;"></div>
<div style="left:1703px;top:672px;width:24px;height:24px;background:#2c3680;border-radius:1px;"></div>
<span class="t" style="top:674px;color:#e9ecf6;transform:scaleX(0.706);left:1540px;width:300px;text-align:center;transform-origin:50% 50%;">17</span>
<div style="left:1733px;top:670px;width:52px;height:28px;background:#3c4566;border-radius:4px;"></div>
<div style="left:1759px;top:672px;width:24px;height:24px;background:#3449a6;border-radius:1px;"></div>
<span class="t" style="top:674px;color:#e9ecf6;transform:scaleX(0.706);left:1596px;width:300px;text-align:center;transform-origin:50% 50%;">18</span>
<div style="left:1790px;top:670px;width:52px;height:28px;background:#3c4566;border-radius:4px;"></div>
<div style="left:1816px;top:672px;width:24px;height:24px;background:#3d59cc;border-radius:1px;"></div>
<span class="t" style="top:674px;color:#e9ecf6;transform:scaleX(0.706);left:1653px;width:300px;text-align:center;transform-origin:50% 50%;">19</span>
<div style="left:1848px;top:670px;width:52px;height:28px;background:#3c4566;border-radius:4px;"></div>
<div style="left:1874px;top:672px;width:24px;height:24px;background:#3d82ee;border-radius:1px;"></div>
<span class="t" style="top:674px;color:#e9ecf6;transform:scaleX(0.835);left:1711px;width:300px;text-align:center;transform-origin:50% 50%;">20</span>
<div style="left:1677px;top:705px;width:52px;height:28px;background:#3c4566;border-radius:4px;"></div>
<div style="left:1703px;top:707px;width:24px;height:24px;background:#3f9ff7;border-radius:1px;"></div>
<span class="t" style="top:709px;color:#e9ecf6;transform:scaleX(0.706);left:1540px;width:300px;text-align:center;transform-origin:50% 50%;">21</span>
<div style="left:1733px;top:705px;width:52px;height:28px;background:#3c4566;border-radius:4px;"></div>
<div style="left:1759px;top:707px;width:24px;height:24px;background:#57c0f6;border-radius:1px;"></div>
<span class="t" style="top:709px;color:#e9ecf6;transform:scaleX(0.835);left:1596px;width:300px;text-align:center;transform-origin:50% 50%;">22</span>
<div style="left:1790px;top:705px;width:52px;height:28px;background:#3c4566;border-radius:4px;"></div>
<div style="left:1816px;top:707px;width:24px;height:24px;background:#66ecf5;border-radius:1px;"></div>
<span class="t" style="top:709px;color:#e9ecf6;transform:scaleX(0.835);left:1653px;width:300px;text-align:center;transform-origin:50% 50%;">23</span>
<div style="left:1848px;top:705px;width:52px;height:28px;background:#3c4566;border-radius:4px;"></div>
<div style="left:1874px;top:707px;width:24px;height:24px;background:#b8f1f5;border-radius:1px;"></div>
<span class="t" style="top:709px;color:#e9ecf6;transform:scaleX(0.835);left:1711px;width:300px;text-align:center;transform-origin:50% 50%;">24</span>
<div style="left:1677px;top:740px;width:52px;height:28px;background:#3c4566;border-radius:4px;"></div>
<div style="left:1703px;top:742px;width:24px;height:24px;background:#f5f5f5;border-radius:1px;"></div>
<span class="t" style="top:744px;color:#e9ecf6;transform:scaleX(0.835);left:1540px;width:300px;text-align:center;transform-origin:50% 50%;">25</span>
<div style="left:1733px;top:740px;width:52px;height:28px;background:#3c4566;border-radius:4px;"></div>
<div style="left:1759px;top:742px;width:24px;height:24px;background:#cfd7e0;border-radius:1px;"></div>
<span class="t" style="top:744px;color:#e9ecf6;transform:scaleX(0.835);left:1596px;width:300px;text-align:center;transform-origin:50% 50%;">26</span>
<div style="left:1790px;top:740px;width:52px;height:28px;background:#3c4566;border-radius:4px;"></div>
<div style="left:1816px;top:742px;width:24px;height:24px;background:#a8b7c7;border-radius:1px;"></div>
<span class="t" style="top:744px;color:#e9ecf6;transform:scaleX(0.835);left:1653px;width:300px;text-align:center;transform-origin:50% 50%;">27</span>
<div style="left:1848px;top:740px;width:52px;height:28px;background:#3c4566;border-radius:4px;"></div>
<div style="left:1874px;top:742px;width:24px;height:24px;background:#8497ad;border-radius:1px;"></div>
<span class="t" style="top:744px;color:#e9ecf6;transform:scaleX(0.835);left:1711px;width:300px;text-align:center;transform-origin:50% 50%;">28</span>
<div style="left:1677px;top:775px;width:52px;height:28px;background:#3c4566;border-radius:4px;"></div>
<div style="left:1703px;top:777px;width:24px;height:24px;background:#5a6e8c;border-radius:1px;"></div>
<span class="t" style="top:779px;color:#e9ecf6;transform:scaleX(0.835);left:1540px;width:300px;text-align:center;transform-origin:50% 50%;">29</span>
<div style="left:1733px;top:775px;width:52px;height:28px;background:#3c4566;border-radius:4px;"></div>
<div style="left:1759px;top:777px;width:24px;height:24px;background:#455574;border-radius:1px;"></div>
<span class="t" style="top:779px;color:#e9ecf6;transform:scaleX(0.835);left:1596px;width:300px;text-align:center;transform-origin:50% 50%;">30</span>
<div style="left:1790px;top:775px;width:52px;height:28px;background:#3c4566;border-radius:4px;"></div>
<div style="left:1816px;top:777px;width:24px;height:24px;background:#343f5d;border-radius:1px;"></div>
<span class="t" style="top:779px;color:#e9ecf6;transform:scaleX(0.706);left:1653px;width:300px;text-align:center;transform-origin:50% 50%;">31</span>
<div style="left:1848px;top:775px;width:52px;height:28px;background:#3c4566;border-radius:4px;"></div>
<div style="left:1874px;top:777px;width:24px;height:24px;background:#262a42;border-radius:1px;"></div>
<span class="t" style="top:779px;color:#e9ecf6;transform:scaleX(0.835);left:1711px;width:300px;text-align:center;transform-origin:50% 50%;">32</span>
<div style="left:1677px;top:810px;width:51px;height:26px;background:#3c4566;border-radius:4px;"></div>
<svg style="left:1695px;top:817px;" width="14" height="14" viewBox="0 0 14 14"><path d="M7 0.500 V13.500 M0.500 7 H13.500" stroke="#e9ecf6" stroke-width="1.800"/></svg>
<div style="left:1671px;top:855px;width:235px;height:28px;background:#262b44;border-radius:3px;"></div>
<svg style="left:1680px;top:863px;" width="12" height="12" viewBox="0 0 12 12"><path d="M4 2 L4 10 L8 6 Z" fill="#e9ecf6"/></svg>
<span class="t" style="top:859px;color:#e9ecf6;transform:scaleX(0.828);left:1696px;transform-origin:0 50%;">Mask</span>
<div style="left:1671px;top:897px;width:235px;height:30px;background:#262b44;border-radius:3px;"></div>
<svg style="left:1680px;top:905px;" width="12" height="12" viewBox="0 0 12 12"><path d="M4 2 L4 10 L8 6 Z" fill="#e9ecf6"/></svg>
<span class="t" style="top:901px;color:#e9ecf6;transform:scaleX(0.863);left:1696px;transform-origin:0 50%;">Dithering</span>
<span class="t" style="top:942px;color:#e9ecf6;transform:scaleX(0.820);left:1637px;width:300px;text-align:center;transform-origin:50% 50%;">Lines</span>
<div style="left:1671px;top:972px;width:235px;height:28px;background:#262b44;border-radius:3px;"></div>
<svg style="left:1680px;top:979px;" width="12" height="12" viewBox="0 0 12 12"><path d="M4 2 L4 10 L8 6 Z" fill="#e9ecf6"/></svg>
<span class="t" style="top:975px;color:#e9ecf6;transform:scaleX(0.809);left:1696px;transform-origin:0 50%;">Outline</span>
<div style="left:1671px;top:1014px;width:235px;height:28px;background:#262b44;border-radius:3px;"></div>
<svg style="left:1680px;top:1021px;" width="12" height="12" viewBox="0 0 12 12"><path d="M4 2 L4 10 L8 6 Z" fill="#e9ecf6"/></svg>
<span class="t" style="top:1017px;color:#e9ecf6;transform:scaleX(0.903);left:1696px;transform-origin:0 50%;">Inline</span>
<span class="t" style="top:1058px;color:#e9ecf6;transform:scaleX(0.928);left:1637px;width:300px;text-align:center;transform-origin:50% 50%;">Filters</span>
<!--animation panel-->
<svg style="left:274px;top:762px;" width="12" height="12" viewBox="0 0 12 12"><path d="M1.5 4 L10.5 4 L6 8.5 Z" fill="#e9ecf6"/></svg>
<span class="t" style="top:757px;color:#e9ecf6;transform:scaleX(0.804);left:308px;transform-origin:0 50%;">Animation</span>
<div style="left:298px;top:780px;width:76px;height:3px;background:#5fb0e8;border-radius:1px;"></div>
<div style="left:268px;top:789px;width:32px;height:30px;background:#262b44;border-radius:3px;"></div>
<svg style="left:277px;top:797px;" width="14" height="14" viewBox="0 0 14 14"><path d="M0.5 2 H13.5 M0.5 7 H13.5 M0.5 12 H13.5" stroke="#e9ecf6" stroke-width="2" stroke-linecap="round"/></svg>
<div style="left:304px;top:789px;width:237px;height:30px;background:#262b44;border-radius:3px;"></div>
<span class="t" style="top:794px;color:#e9ecf6;transform:scaleX(0.838);left:311px;transform-origin:0 50%;">slash</span>
<svg style="left:520px;top:799px;" width="12" height="12" viewBox="0 0 12 12"><path d="M2 4 L10 4 L6 8 Z" fill="#e9ecf6"/></svg>
<div style="left:825px;top:789px;width:30px;height:30px;background:#262b44;border-radius:3px;"></div>
<svg style="left:835px;top:798px;" width="10" height="10" viewBox="0 0 10 10"><path d="M0.500 0.500 L9.500 5 L0.500 9.500 Z" fill="#e9ecf6"/></svg>
<div style="left:860px;top:789px;width:202px;height:30px;background:#262b44;border-radius:3px;"></div>
<span class="t" style="top:794px;color:#e9ecf6;transform:scaleX(0.771);left:865px;transform-origin:0 50%;">Time</span>
<span class="t" style="top:794px;color:#e9ecf6;transform:scaleX(0.817);word-spacing:4.67px;left:898px;transform-origin:0 50%;">0.125 s</span>
<span class="t" style="top:794px;color:#e9ecf6;transform:scaleX(0.925);word-spacing:3.68px;left:976px;transform-origin:0 50%;">/ 1 s</span>
<div style="left:898px;top:816px;width:70px;height:2px;background:#1f2339;"></div>
<div style="left:898px;top:816px;width:9px;height:2px;background:#4fa8ea;"></div>
<div style="left:1067px;top:789px;width:31px;height:30px;background:#262b44;border-radius:3px;"></div>
<svg style="left:1075px;top:796px;" width="16" height="16" viewBox="0 0 16 16"><path d="M13.800 6.500 A6 6 0 0 0 3 4.200" fill="none" stroke="#4fa8ea" stroke-width="2.200"/><path d="M2.200 9.500 A6 6 0 0 0 13 11.800" fill="none" stroke="#4fa8ea" stroke-width="2.200"/><path d="M0.500 1.500 L6 2.500 L1.800 7 Z M15.500 14.500 L10 13.500 L14.200 9 Z" fill="#4fa8ea"/></svg>
<div style="left:1383px;top:789px;width:132px;height:30px;background:#262b44;border-radius:3px;"></div>
<span class="t" style="top:794px;color:#e9ecf6;transform:scaleX(0.877);left:1392px;transform-origin:0 50%;">Freq.</span>
<svg style="left:1431px;top:797px;" width="14" height="14" viewBox="0 0 14 14"><path d="M4 11.2 A4.8 4.8 0 1 0 3 5.6" fill="none" stroke="#e9ecf6" stroke-width="2.5"/><path d="M0 4.6 L6.4 3.4 L4.8 9.8 Z" fill="#e9ecf6"/></svg>
<span class="t" style="top:794px;color:#e9ecf6;transform:scaleX(0.794);word-spacing:4.92px;left:1447px;transform-origin:0 50%;">60 FPS</span>
<div style="left:1447px;top:816px;width:20px;height:2px;background:#4fa8ea;"></div>
<div style="left:1521px;top:789px;width:134px;height:30px;background:#262b44;border-radius:3px;"></div>
<span class="t" style="top:794px;color:#e9ecf6;transform:scaleX(0.809);left:1531px;transform-origin:0 50%;">Speed</span>
<svg style="left:1571px;top:797px;" width="14" height="14" viewBox="0 0 14 14"><path d="M4 11.2 A4.8 4.8 0 1 0 3 5.6" fill="none" stroke="#e9ecf6" stroke-width="2.5"/><path d="M0 4.6 L6.4 3.4 L4.8 9.8 Z" fill="#e9ecf6"/></svg>
<span class="t" style="top:794px;color:#e9ecf6;transform:scaleX(0.844);word-spacing:4.40px;left:1587px;transform-origin:0 50%;">0.5 x</span>
<div style="left:1588px;top:816px;width:2px;height:2px;background:#4fa8ea;"></div>
<div style="left:268px;top:831px;width:32px;height:31px;background:#2a3552;border-radius:3px;"></div>
<svg style="left:275px;top:837px;" width="18" height="16" viewBox="0 0 18 16"><circle cx="4" cy="4.500" r="2.600" fill="none" stroke="#4fa8ea" stroke-width="1.700"/><path d="M6.500 4.500 H15.500 M13 4.500 V8 M10 4.500 V7" stroke="#4fa8ea" stroke-width="1.700" fill="none"/><text x="2" y="15.500" font-size="6.500" font-weight="bold" fill="#4fa8ea" font-family="Liberation Sans, sans-serif">●REC</text></svg>
<div style="left:304px;top:831px;width:201px;height:31px;background:#262b44;border-radius:3px;"></div>
<svg style="left:313px;top:838px;" width="14" height="14" viewBox="0 0 14 14"><path d="M7 0.500 V13.500 M0.500 7 H13.500" stroke="#e9ecf6" stroke-width="1.800"/></svg>
<span class="t" style="top:835px;color:#e9ecf6;transform:scaleX(0.735);left:263px;width:300px;text-align:center;transform-origin:50% 50%;">Add</span>
<div style="left:510px;top:831px;width:31px;height:31px;background:#262b44;border-radius:3px;"></div>
<svg style="left:518px;top:838px;" width="14" height="14" viewBox="0 0 14 14"><path d="M0.500 1 H13.500 L8.500 7 V13 L5.500 11 V7 Z" fill="#e9ecf6"/></svg>
<div style="left:550px;top:831px;width:826px;height:32px;background:#262b44;border-radius:3px;"></div>
<div style="left:552px;top:832px;width:1px;height:30px;background:#e9ecf6;"></div>
<span class="t" style="top:833px;color:#e9ecf6;transform:scaleX(0.771);left:555px;transform-origin:0 50%;">0</span>
<div style="left:604px;top:832px;width:1px;height:30px;background:#e9ecf6;"></div>
<span class="t" style="top:833px;color:#e9ecf6;transform:scaleX(0.822);left:607px;transform-origin:0 50%;">0.2</span>
<div style="left:657px;top:832px;width:1px;height:30px;background:#e9ecf6;"></div>
<span class="t" style="top:833px;color:#e9ecf6;transform:scaleX(0.822);left:660px;transform-origin:0 50%;">0.4</span>
<div style="left:710px;top:832px;width:1px;height:30px;background:#e9ecf6;"></div>
<span class="t" style="top:833px;color:#e9ecf6;transform:scaleX(0.822);left:713px;transform-origin:0 50%;">0.6</span>
<div style="left:763px;top:832px;width:1px;height:30px;background:#e9ecf6;"></div>
<span class="t" style="top:833px;color:#e9ecf6;transform:scaleX(0.822);left:766px;transform-origin:0 50%;">0.8</span>
<div style="left:816px;top:832px;width:1px;height:30px;background:#e9ecf6;"></div>
<span class="t" style="top:833px;color:#e9ecf6;transform:scaleX(0.700);left:819px;transform-origin:0 50%;">1</span>
<div style="left:869px;top:832px;width:1px;height:30px;background:#4c5575;"></div>
<span class="t" style="top:833px;color:#5b6483;transform:scaleX(0.719);left:872px;transform-origin:0 50%;">1.2</span>
<div style="left:922px;top:832px;width:1px;height:30px;background:#4c5575;"></div>
<span class="t" style="top:833px;color:#5b6483;transform:scaleX(0.719);left:925px;transform-origin:0 50%;">1.4</span>
<div style="left:975px;top:832px;width:1px;height:30px;background:#4c5575;"></div>
<span class="t" style="top:833px;color:#5b6483;transform:scaleX(0.719);left:978px;transform-origin:0 50%;">1.6</span>
<div style="left:1028px;top:832px;width:1px;height:30px;background:#4c5575;"></div>
<span class="t" style="top:833px;color:#5b6483;transform:scaleX(0.719);left:1031px;transform-origin:0 50%;">1.8</span>
<div style="left:1080px;top:832px;width:1px;height:30px;background:#4c5575;"></div>
<span class="t" style="top:833px;color:#5b6483;transform:scaleX(0.771);left:1083px;transform-origin:0 50%;">2</span>
<div style="left:1133px;top:832px;width:1px;height:30px;background:#4c5575;"></div>
<span class="t" style="top:833px;color:#5b6483;transform:scaleX(0.822);left:1136px;transform-origin:0 50%;">2.2</span>
<div style="left:1186px;top:832px;width:1px;height:30px;background:#4c5575;"></div>
<span class="t" style="top:833px;color:#5b6483;transform:scaleX(0.822);left:1189px;transform-origin:0 50%;">2.4</span>
<div style="left:1239px;top:832px;width:1px;height:30px;background:#4c5575;"></div>
<span class="t" style="top:833px;color:#5b6483;transform:scaleX(0.822);left:1242px;transform-origin:0 50%;">2.6</span>
<div style="left:1292px;top:832px;width:1px;height:30px;background:#4c5575;"></div>
<span class="t" style="top:833px;color:#5b6483;transform:scaleX(0.822);left:1295px;transform-origin:0 50%;">2.8</span>
<div style="left:1345px;top:832px;width:1px;height:30px;background:#4c5575;"></div>
<span class="t" style="top:833px;color:#5b6483;transform:scaleX(0.771);left:1348px;transform-origin:0 50%;">3</span>
<div style="left:268px;top:872px;width:273px;height:198px;background:#262b44;border-radius:3px;"></div>
<svg style="left:274px;top:882px;" width="12" height="12" viewBox="0 0 12 12"><path d="M2 4 L10 4 L6 8 Z" fill="#e9ecf6"/></svg>
<svg style="left:289px;top:882px;" width="14" height="12" viewBox="0 0 14 12"><rect x="0.8" y="0.8" width="12.4" height="10.4" fill="none" stroke="#e9ecf6" stroke-width="1.5"/><path d="M2.5 9.5 L5.5 5.5 L7.5 8 L9 6.5 L11.5 9.5 Z" fill="#e9ecf6"/></svg>
<span class="t" style="top:878px;color:#e9ecf6;transform:scaleX(0.851);left:307px;transform-origin:0 50%;">1-Sword</span>
<svg style="left:519px;top:882px;" width="12" height="12" viewBox="0 0 12 12"><rect x="0" y="0" width="12" height="12" rx="2" fill="#4fa8ea"/><path d="M2.6 5.6 L5.2 8.2 L9.6 3.2" stroke="#262b44" stroke-width="2" fill="none"/></svg>
<div style="left:303px;top:900px;width:206px;height:23px;background:#4a5678;border-radius:3px;"></div>
<span class="t" style="top:902px;color:#4fa8ea;transform:scaleX(0.931);word-spacing:3.63px;left:303px;transform-origin:0 50%;">Trail / Duration</span>
<svg style="left:519px;top:906px;" width="12" height="12" viewBox="0 0 12 12"><rect x="0" y="0" width="12" height="12" rx="2" fill="#4fa8ea"/><path d="M2.6 5.6 L5.2 8.2 L9.6 3.2" stroke="#262b44" stroke-width="2" fill="none"/></svg>
<span class="t" style="top:926px;color:#e9ecf6;transform:scaleX(0.917);word-spacing:3.74px;left:303px;transform-origin:0 50%;">Transform / Position</span>
<svg style="left:519px;top:930px;" width="12" height="12" viewBox="0 0 12 12"><rect x="0" y="0" width="12" height="12" rx="2" fill="#4fa8ea"/><path d="M2.6 5.6 L5.2 8.2 L9.6 3.2" stroke="#262b44" stroke-width="2" fill="none"/></svg>
<span class="t" style="top:950px;color:#e9ecf6;transform:scaleX(0.929);word-spacing:3.64px;left:303px;transform-origin:0 50%;">Transform / Rotation</span>
<svg style="left:519px;top:954px;" width="12" height="12" viewBox="0 0 12 12"><rect x="0" y="0" width="12" height="12" rx="2" fill="#4fa8ea"/><path d="M2.6 5.6 L5.2 8.2 L9.6 3.2" stroke="#262b44" stroke-width="2" fill="none"/></svg>
<svg style="left:274px;top:978px;" width="12" height="12" viewBox="0 0 12 12"><path d="M2 4 L10 4 L6 8 Z" fill="#e9ecf6"/></svg>
<svg style="left:290px;top:978px;" width="12" height="12" viewBox="0 0 12 12"><rect x="0" y="0" width="12" height="12" rx="2.500" fill="#e2e9d2"/><path d="M4.200 1 V11 M7.800 1 V11 M1 4.200 H11 M1 7.800 H11" stroke="#b9c7a0" stroke-width="0.800"/></svg>
<span class="t" style="top:974px;color:#e9ecf6;transform:scaleX(0.809);left:307px;transform-origin:0 50%;">Shape</span>
<svg style="left:519px;top:978px;" width="12" height="12" viewBox="0 0 12 12"><rect x="0" y="0" width="12" height="12" rx="2" fill="#4fa8ea"/><path d="M2.6 5.6 L5.2 8.2 L9.6 3.2" stroke="#262b44" stroke-width="2" fill="none"/></svg>
<span class="t" style="top:998px;color:#e9ecf6;transform:scaleX(0.931);word-spacing:3.63px;left:303px;transform-origin:0 50%;">Trail / Duration</span>
<svg style="left:519px;top:1002px;" width="12" height="12" viewBox="0 0 12 12"><rect x="0" y="0" width="12" height="12" rx="2" fill="#4fa8ea"/><path d="M2.6 5.6 L5.2 8.2 L9.6 3.2" stroke="#262b44" stroke-width="2" fill="none"/></svg>
<div style="left:305px;top:1024px;width:106px;height:30px;background:#262b44;border-radius:3px;border:1px solid #e9ecf6;box-sizing:border-box;"></div>
<span class="t" style="top:1029px;color:#e9ecf6;transform:scaleX(0.931);word-spacing:3.63px;left:310px;transform-origin:0 50%;">Trail / Duration</span>
<div style="left:550px;top:872px;width:826px;height:198px;background:#262b44;border-radius:3px;"></div>
<div style="left:550px;top:898px;width:818px;height:23px;background:#20243d;"></div>
<div style="left:550px;top:923px;width:818px;height:22px;background:#21263f;"></div>
<div style="left:550px;top:947px;width:818px;height:22px;background:#20243d;"></div>
<div style="left:550px;top:995px;width:818px;height:22px;background:#20243d;"></div>
<div style="left:550px;top:970px;width:818px;height:1px;background:#3c4566;"></div>
<div style="left:684px;top:904px;width:79px;height:12px;background:#4a5477;"></div>
<svg style="left:551px;top:904px;" width="8" height="12" viewBox="0 0 8 12"><path d="M0.500 0.500 L7 6 L0.500 11.500 Z" fill="#e9ecf6"/></svg>
<svg style="left:571px;top:903px;" width="14" height="14" viewBox="0 0 14 14"><path d="M7 0.800 L13.200 7 L7 13.200 L0.800 7 Z" fill="#4fa8ea"/></svg>
<svg style="left:597px;top:903px;" width="14" height="14" viewBox="0 0 14 14"><path d="M7 0.800 L13.200 7 L7 13.200 L0.800 7 Z" fill="#e9ecf6"/></svg>
<svg style="left:677px;top:903px;" width="14" height="14" viewBox="0 0 14 14"><path d="M7 0.800 L13.200 7 L7 13.200 L0.800 7 Z" fill="#e9ecf6"/></svg>
<svg style="left:756px;top:903px;" width="14" height="14" viewBox="0 0 14 14"><path d="M7 0.800 L13.200 7 L7 13.200 L0.800 7 Z" fill="#e9ecf6"/></svg>
<svg style="left:783px;top:903px;" width="14" height="14" viewBox="0 0 14 14"><path d="M7 0.800 L13.200 7 L7 13.200 L0.800 7 Z" fill="#e9ecf6"/></svg>
<svg style="left:809px;top:903px;" width="14" height="14" viewBox="0 0 14 14"><path d="M7 0.800 L13.200 7 L7 13.200 L0.800 7 Z" fill="#e9ecf6"/></svg>
<div style="left:684px;top:1000px;width:79px;height:12px;background:#4a5477;"></div>
<svg style="left:551px;top:1000px;" width="8" height="12" viewBox="0 0 8 12"><path d="M0.500 0.500 L7 6 L0.500 11.500 Z" fill="#e9ecf6"/></svg>
<svg style="left:571px;top:999px;" width="14" height="14" viewBox="0 0 14 14"><path d="M7 0.800 L13.200 7 L7 13.200 L0.800 7 Z" fill="#e9ecf6"/></svg>
<svg style="left:597px;top:999px;" width="14" height="14" viewBox="0 0 14 14"><path d="M7 0.800 L13.200 7 L7 13.200 L0.800 7 Z" fill="#e9ecf6"/></svg>
<svg style="left:677px;top:999px;" width="14" height="14" viewBox="0 0 14 14"><path d="M7 0.800 L13.200 7 L7 13.200 L0.800 7 Z" fill="#e9ecf6"/></svg>
<svg style="left:756px;top:999px;" width="14" height="14" viewBox="0 0 14 14"><path d="M7 0.800 L13.200 7 L7 13.200 L0.800 7 Z" fill="#e9ecf6"/></svg>
<svg style="left:783px;top:999px;" width="14" height="14" viewBox="0 0 14 14"><path d="M7 0.800 L13.200 7 L7 13.200 L0.800 7 Z" fill="#e9ecf6"/></svg>
<svg style="left:809px;top:999px;" width="14" height="14" viewBox="0 0 14 14"><path d="M7 0.800 L13.200 7 L7 13.200 L0.800 7 Z" fill="#e9ecf6"/></svg>
<div style="left:552px;top:928px;width:20px;height:12px;background:#4a5477;"></div>
<svg style="left:551px;top:928px;" width="8" height="12" viewBox="0 0 8 12"><path d="M0.500 0.500 L7 6 L0.500 11.500 Z" fill="#e9ecf6"/></svg>
<svg style="left:565px;top:927px;" width="14" height="14" viewBox="0 0 14 14"><path d="M7 0.800 L13.200 7 L7 13.200 L0.800 7 Z" fill="#e9ecf6"/></svg>
<svg style="left:675px;top:927px;" width="14" height="14" viewBox="0 0 14 14"><path d="M7 0.800 L13.200 7 L7 13.200 L0.800 7 Z" fill="#e9ecf6"/></svg>
<svg style="left:756px;top:927px;" width="14" height="14" viewBox="0 0 14 14"><path d="M7 0.800 L13.200 7 L7 13.200 L0.800 7 Z" fill="#e9ecf6"/></svg>
<svg style="left:809px;top:927px;" width="14" height="14" viewBox="0 0 14 14"><path d="M7 0.800 L13.200 7 L7 13.200 L0.800 7 Z" fill="#e9ecf6"/></svg>
<div style="left:552px;top:952px;width:20px;height:12px;background:#4a5477;"></div>
<svg style="left:551px;top:952px;" width="8" height="12" viewBox="0 0 8 12"><path d="M0.500 0.500 L7 6 L0.500 11.500 Z" fill="#e9ecf6"/></svg>
<svg style="left:565px;top:951px;" width="14" height="14" viewBox="0 0 14 14"><path d="M7 0.800 L13.200 7 L7 13.200 L0.800 7 Z" fill="#e9ecf6"/></svg>
<svg style="left:675px;top:951px;" width="14" height="14" viewBox="0 0 14 14"><path d="M7 0.800 L13.200 7 L7 13.200 L0.800 7 Z" fill="#e9ecf6"/></svg>
<svg style="left:756px;top:951px;" width="14" height="14" viewBox="0 0 14 14"><path d="M7 0.800 L13.200 7 L7 13.200 L0.800 7 Z" fill="#e9ecf6"/></svg>
<svg style="left:809px;top:951px;" width="14" height="14" viewBox="0 0 14 14"><path d="M7 0.800 L13.200 7 L7 13.200 L0.800 7 Z" fill="#e9ecf6"/></svg>
<div style="left:583px;top:837px;width:3px;height:22px;background:#6aa8e2;"></div>
<div style="left:582px;top:857px;width:5px;height:4px;background:#5b9bd8;border-radius:2px;"></div>
<div style="left:583px;top:872px;width:3px;height:198px;background:#5ba3e6;"></div>
<svg style="left:579px;top:832px;" width="11" height="8" viewBox="0 0 11 8"><path d="M0.500 0.300 H10.500 L5.500 7.500 Z" fill="#4fb0ff"/></svg>
<div style="left:1383px;top:831px;width:272px;height:31px;background:#262b44;border-radius:3px;"></div>
<span class="t" style="top:836px;color:#e9ecf6;transform:scaleX(0.789);left:1394px;transform-origin:0 50%;">Snap</span>
<span class="t" style="top:836px;color:#e9ecf6;transform:scaleX(0.771);word-spacing:5.19px;left:1502px;transform-origin:0 50%;">0.1 s</span>
<svg style="left:1633px;top:838px;" width="14" height="14" viewBox="0 0 14 14"><path d="M1 1 H5.500 V7 A1.500 1.500 0 0 0 8.500 7 V1 H13 V7 A6 6 0 0 1 1 7 Z" fill="#e9ecf6"/><path d="M1 3.600 H5.500 M8.500 3.600 H13" stroke="#262b44" stroke-width="1.200"/></svg>
<div style="left:1383px;top:872px;width:272px;height:198px;background:#262b44;border-radius:3px;overflow:hidden;">
<span class="t" style="top:-10px;color:#e9ecf6;transform:scaleX(0.857);left:11px;transform-origin:0 50%;">Step</span>
<span class="t" style="top:-10px;color:#e9ecf6;transform:scaleX(0.799);left:131px;transform-origin:0 50%;">0.001</span>
<span class="t" style="top:22px;color:#e9ecf6;transform:scaleX(0.835);left:11px;transform-origin:0 50%;">Wrap</span>
<span class="t" style="top:22px;color:#4fa8ea;transform:scaleX(0.700);left:152px;transform-origin:0 50%;">On</span>
<span class="t" style="top:54px;color:#e9ecf6;transform:scaleX(0.784);left:11px;transform-origin:0 50%;">Modulo</span>
<span class="t" style="top:54px;color:#e9ecf6;transform:scaleX(0.771);left:131px;transform-origin:0 50%;">0</span>
<span class="t" style="top:86px;color:#e9ecf6;transform:scaleX(0.779);left:-19px;width:300px;text-align:center;transform-origin:50% 50%;">Key</span>
<span class="t" style="top:118px;color:#e9ecf6;transform:scaleX(0.771);left:11px;transform-origin:0 50%;">Time</span>
<span class="t" style="top:118px;color:#e9ecf6;transform:scaleX(0.771);word-spacing:5.19px;left:131px;transform-origin:0 50%;">0.1 s</span>
<span class="t" style="top:150px;color:#e9ecf6;transform:scaleX(0.820);left:11px;transform-origin:0 50%;">Value</span>
<span class="t" style="top:150px;color:#e9ecf6;transform:scaleX(0.799);left:131px;transform-origin:0 50%;">0.015</span>
<span class="t" style="top:181px;color:#e9ecf6;transform:scaleX(0.894);word-spacing:3.94px;left:-19px;width:300px;text-align:center;transform-origin:50% 50%;">Key transition</span>
</div>
<svg style="left:1517px;top:898px;" width="12" height="12" viewBox="0 0 12 12"><rect x="0" y="0" width="12" height="12" rx="2" fill="#4fa8ea"/><path d="M2.6 5.6 L5.2 8.2 L9.6 3.2" stroke="#262b44" stroke-width="2" fill="none"/></svg>
<svg style="left:1498px;top:1025px;" width="14" height="14" viewBox="0 0 14 14"><path d="M4 11.2 A4.8 4.8 0 1 0 3 5.6" fill="none" stroke="#e9ecf6" stroke-width="2.5"/><path d="M0 4.6 L6.4 3.4 L4.8 9.8 Z" fill="#e9ecf6"/></svg>
<div style="left:1514px;top:1012px;width:134px;height:2px;background:#1f2339;"></div>
<div style="left:1514px;top:1012px;width:14px;height:2px;background:#4fa8ea;"></div>
<div style="left:1649px;top:905px;width:3px;height:115px;background:#4d5a7e;border-radius:2px;"></div>
</body></html>
